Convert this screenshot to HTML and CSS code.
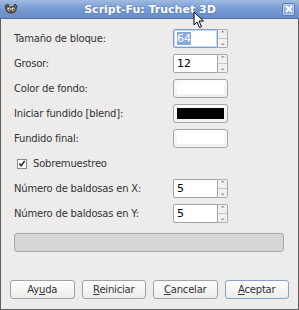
FILE: index.html
```html
<!DOCTYPE html>
<html lang="es">
<head>
  <meta charset="UTF-8" />
  <title>Script-Fu: Truchet 3D</title>
  <link rel="stylesheet" href="styles.css">
</head>
<body>
  <div class="window">
    <div class="titlebar">
      <svg class="app-icon" width="14" height="12" viewBox="0 0 14 12">
        <path d="M1 3 L4 1 L5 4 L9 4 L11 1 L13 3 L12 6 Q12 10 7 10 Q2 10 2 6 Z" fill="#6b5a44" stroke="#2e2a24" stroke-width="0.8"/>
        <circle cx="5" cy="6" r="1.6" fill="#fff"/>
        <circle cx="9" cy="6" r="1.6" fill="#fff"/>
        <circle cx="5.3" cy="6.2" r="0.7" fill="#000"/>
        <circle cx="9.3" cy="6.2" r="0.7" fill="#000"/>
      </svg>
      <span class="title">Script-Fu: Truchet 3D</span>
      <span class="close">
        <svg width="8" height="8" viewBox="0 0 8 8"><path d="M1 1 L7 7 M7 1 L1 7" stroke="#fff" stroke-width="1.8"/></svg>
      </span>
    </div>

    <div class="content">
      <div class="form">
        <label>Tamaño de bloque:</label>
        <div class="spin focused">
          <div class="entry"><span class="sel">64</span></div>
          <div class="arrows"><span>&#8963;</span><span>&#8964;</span></div>
        </div>

        <label>Grosor:</label>
        <div class="spin">
          <div class="entry">12</div>
          <div class="arrows"><span>&#8963;</span><span>&#8964;</span></div>
        </div>

        <label>Color de fondo:</label>
        <div class="colorbtn"><div class="swatch"></div></div>

        <label>Iniciar fundido [blend]:</label>
        <div class="colorbtn"><div class="swatch black"></div></div>

        <label>Fundido final:</label>
        <div class="colorbtn"><div class="swatch"></div></div>

        <div class="check">
          <span class="box">
            <svg width="9" height="9" viewBox="0 0 9 9"><path d="M1.5 4.5 L3.5 7 L7.5 1.5" fill="none" stroke="#222" stroke-width="1.6"/></svg>
          </span>
          Sobremuestreo
        </div>

        <label>Número de baldosas en X:</label>
        <div class="spin">
          <div class="entry">5</div>
          <div class="arrows"><span>&#8963;</span><span>&#8964;</span></div>
        </div>

        <label>Número de baldosas en Y:</label>
        <div class="spin">
          <div class="entry">5</div>
          <div class="arrows"><span>&#8963;</span><span>&#8964;</span></div>
        </div>
      </div>

      <div class="progress"></div>

      <div class="buttons">
        <button>Ay<u>u</u>da</button>
        <button><u>R</u>einiciar</button>
        <button><u>C</u>ancelar</button>
        <button class="default"><u>A</u>ceptar</button>
      </div>
    </div>

    <svg class="cursor" width="12" height="18" viewBox="0 0 12 18">
      <path d="M1 1 L1 14 L4 11 L6.5 16.5 L8.5 15.5 L6 10 L10.5 10 Z" fill="#fff" stroke="#000" stroke-width="1"/>
    </svg>
  </div>
</body>
</html>
```

FILE: styles.css
```css
html, body {
  margin: 0;
  padding: 0;
}
body {
  width: 299px;
  height: 310px;
  font-family: "DejaVu Sans", sans-serif;
  font-size: 10px;
  letter-spacing: -0.2px;
  color: #333;
}
.window {
  position: relative;
  width: 299px;
  height: 310px;
  box-sizing: border-box;
  background: #edeceb;
  border: 1px solid #5f5f5f;
  border-top: none;
  display: flex;
  flex-direction: column;
}
.titlebar {
  height: 18px;
  margin: 0 -1px;
  background: linear-gradient(#a0bbe2, #7397d0 55%, #6a8ecb);
  display: flex;
  align-items: center;
  padding: 0 4px;
  border-bottom: 1px solid #4f6f9f;
}
.app-icon {
  flex: none;
}
.title {
  flex: 1;
  text-align: center;
  color: #fff;
  font-weight: bold;
  font-size: 11px;
  letter-spacing: 0;
  text-shadow: 0 0 2px #4a6ea8;
}
.close {
  width: 11px;
  height: 11px;
  border: 1px solid #5a7fb8;
  border-radius: 2px;
  background: linear-gradient(#a8c0e4, #87a6d6);
  display: flex;
  align-items: center;
  justify-content: center;
  box-shadow: inset 0 0 0 1px #b8cdec;
}
.content {
  flex: 1;
  display: flex;
  flex-direction: column;
  padding: 10px 9px 10px 13px;
}
.form {
  display: grid;
  grid-template-columns: 1fr 56px;
  grid-auto-rows: 19px;
  row-gap: 6px;
  align-items: center;
  padding-right: 60px;
}
label {
  display: block;
}
.spin {
  display: flex;
  height: 19px;
}
.entry {
  width: 45px;
  box-sizing: border-box;
  background: #fff;
  border: 1px solid #a4a4a4;
  border-radius: 2px 0 0 2px;
  padding: 0 3px;
  font-size: 11px;
  letter-spacing: 0;
  line-height: 17px;
  color: #000;
}
.focused .entry {
  border-color: #7d9ed6;
  box-shadow: inset 0 0 0 1px #c8d8ef;
}
.sel {
  background: #86a9d9;
  color: #fff;
}
.arrows {
  width: 10px;
  box-sizing: border-box;
  border: 1px solid #ababab;
  border-left: none;
  border-radius: 0 2px 2px 0;
  display: flex;
  flex-direction: column;
  background: #f2f1f0;
}
.arrows span {
  flex: 1;
  font-size: 7px;
  line-height: 8px;
  text-align: center;
  color: #555;
}
.arrows span + span {
  border-top: 1px solid #c6c6c6;
}
.colorbtn {
  width: 55px;
  height: 19px;
  box-sizing: border-box;
  border: 1px solid #a6a6a6;
  border-radius: 3px;
  background: linear-gradient(#fbfbfb, #efefef);
  padding: 3px;
}
.swatch {
  height: 100%;
  background: #fff;
}
.swatch.black {
  background: #000;
}
.check {
  grid-column: 1 / 3;
  display: flex;
  align-items: center;
  gap: 6px;
  padding-left: 3px;
}
.box {
  width: 10px;
  height: 10px;
  box-sizing: border-box;
  border: 1px solid #8a8a8a;
  background: #fff;
  display: flex;
  align-items: center;
  justify-content: center;
}
.progress {
  margin-top: 10px;
  margin-right: 5px;
  height: 19px;
  box-sizing: border-box;
  border: 1px solid #a9a9a9;
  border-radius: 3px;
  background: #d6d6d5;
}
.buttons {
  margin-top: auto;
  display: flex;
  gap: 7px;
  margin-left: -4px;
}
button {
  width: 65px;
  height: 19px;
  box-sizing: border-box;
  border: 1px solid #a3a3a3;
  border-radius: 3px;
  background: linear-gradient(#fdfdfd, #ececeb);
  font-family: "DejaVu Sans", sans-serif;
  font-size: 10px;
  letter-spacing: -0.2px;
  color: #333;
  padding: 0;
}
button.default {
  border-color: #86a2cc;
}
.cursor {
  position: absolute;
  left: 192px;
  top: 11px;
}
```
